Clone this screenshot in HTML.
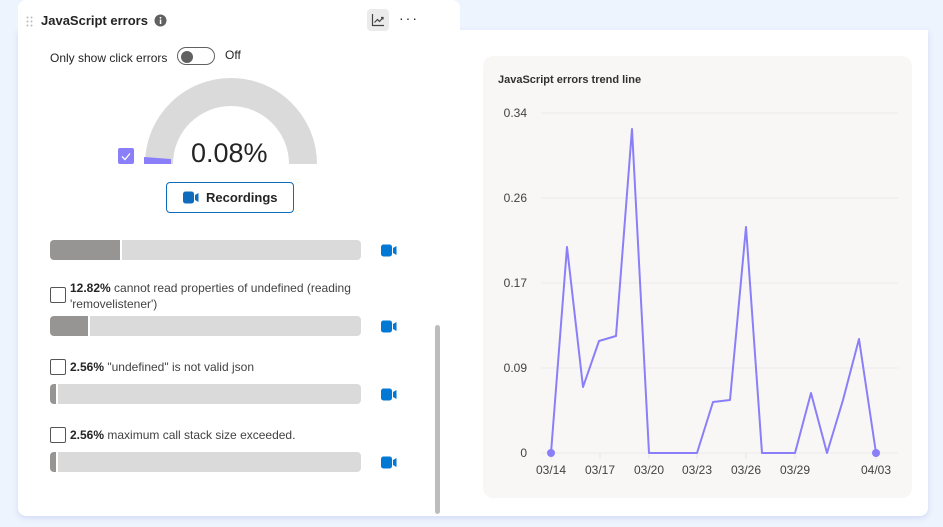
<!DOCTYPE html>
<html><head><style>
body{margin:0;width:943px;height:527px;background:#eef4fd;font-family:"Liberation Sans",sans-serif;position:relative;overflow:hidden;color:#242424}
.card{position:absolute;left:18px;top:30px;width:910px;height:486px;background:#fff;border-radius:0 0 8px 8px;box-shadow:0 2px 6px rgba(120,140,230,.25)}
.head{position:absolute;left:18px;top:0;width:442px;height:40px;background:#fff;border-radius:8px 8px 0 0}
.t{position:absolute;font-size:12px;white-space:nowrap}
.bar{position:absolute;left:50px;width:311px;height:20px;background:#dadada;border-radius:4px;overflow:hidden}
.bar i{position:absolute;left:0;top:0;bottom:0;background:#979593;border-right:2px solid #fff}
.cb{position:absolute;left:50px;width:14px;height:14px;border:1px solid #555;border-radius:2px;background:#fff}
.cam{position:absolute;left:381px}
</style></head><body>
<div class="card"></div>
<div class="head"></div>
<svg style="position:absolute;left:26px;top:16px" width="8" height="12"><g fill="#bbb"><circle cx="1.5" cy="1.5" r="1"/><circle cx="5.5" cy="1.5" r="1"/><circle cx="1.5" cy="5.5" r="1"/><circle cx="5.5" cy="5.5" r="1"/><circle cx="1.5" cy="9.5" r="1"/><circle cx="5.5" cy="9.5" r="1"/></g></svg>
<div class="t" style="left:41px;top:13px;font-size:13px;font-weight:bold">JavaScript errors</div>
<svg style="position:absolute;left:154px;top:14px" width="13" height="13"><circle cx="6.5" cy="6.5" r="6" fill="#616161"/><rect x="5.8" y="5.5" width="1.5" height="4.5" fill="#fff"/><circle cx="6.5" cy="3.8" r="0.9" fill="#fff"/></svg>
<div style="position:absolute;left:367px;top:9px;width:22px;height:22px;background:#ebebeb;border-radius:4px"></div>
<svg style="position:absolute;left:371px;top:13px" width="14" height="14" fill="none" stroke="#424242" stroke-width="1.2"><path d="M1.5 1v11.5H13"/><path d="M3.5 9.5l3-3 2 2 3.5-4"/><path d="M10 4.5h2v2"/></svg>
<div class="t" style="left:399px;top:10px;font-size:14px;letter-spacing:2px">···</div>
<div class="t" style="left:50px;top:51px">Only show click errors</div>
<div style="position:absolute;left:177px;top:47px;width:38px;height:18px;border:1px solid #616161;border-radius:10px;box-sizing:border-box"></div>
<div style="position:absolute;left:181px;top:51px;width:12px;height:12px;border-radius:50%;background:#616161"></div>
<div class="t" style="left:225px;top:48px">Off</div>
<svg style="position:absolute;left:140px;top:74px" width="184" height="92"><path d="M19 90A72 72 0 0 1 163 90" fill="none" stroke="#dadada" stroke-width="28"/><path d="M4 83l27 2v5l-27 0z" fill="#8a7ff8"/></svg>
<div style="position:absolute;left:118px;top:148px;width:16px;height:16px;background:#8a7ff8;border-radius:2px"></div>
<svg style="position:absolute;left:118px;top:148px" width="16" height="16"><path d="M4 8.5l3 3 5-6" stroke="#fff" fill="none" stroke-width="1.3"/></svg>
<div class="t" style="left:191px;top:138px;font-size:27px">0.08%</div>
<div style="position:absolute;left:166px;top:182px;width:128px;height:31px;border:1px solid #0f6cbd;border-radius:4px;box-sizing:border-box"></div>
<svg style="position:absolute;left:183px;top:191px" width="16" height="13"><rect x="0" y="0.5" width="11" height="12" rx="2.5" fill="#0f6cbd"/><path d="M12 4l3.5-2v9L12 9z" fill="#0f6cbd"/></svg>
<div class="t" style="left:206px;top:190px;font-size:13px;font-weight:bold;color:#242424">Recordings</div>
<div class="bar" style="top:240px"><i style="width:70px"></i></div>
<div class="cb" style="top:287px"></div>
<div class="t" style="left:70px;top:280px;line-height:16px"><b>12.82%</b> <span style="color:#424242">cannot read properties of undefined (reading<br>'removelistener')</span></div>
<div class="bar" style="top:316px"><i style="width:38px"></i></div>
<div class="cb" style="top:359px"></div>
<div class="t" style="left:70px;top:360px"><b>2.56%</b> <span style="color:#424242">"undefined" is not valid json</span></div>
<div class="bar" style="top:384px"><i style="width:6px"></i></div>
<div class="cb" style="top:427px"></div>
<div class="t" style="left:70px;top:428px"><b>2.56%</b> <span style="color:#424242">maximum call stack size exceeded.</span></div>
<div class="bar" style="top:452px"><i style="width:6px"></i></div>
<svg class="cam" style="top:244px" width="16" height="13"><rect y="0.5" width="11" height="12" rx="2.5" fill="#0078d4"/><path d="M12 4l3.5-2v9L12 9z" fill="#0078d4"/></svg>
<svg class="cam" style="top:320px" width="16" height="13"><rect y="0.5" width="11" height="12" rx="2.5" fill="#0078d4"/><path d="M12 4l3.5-2v9L12 9z" fill="#0078d4"/></svg>
<svg class="cam" style="top:388px" width="16" height="13"><rect y="0.5" width="11" height="12" rx="2.5" fill="#0078d4"/><path d="M12 4l3.5-2v9L12 9z" fill="#0078d4"/></svg>
<svg class="cam" style="top:456px" width="16" height="13"><rect y="0.5" width="11" height="12" rx="2.5" fill="#0078d4"/><path d="M12 4l3.5-2v9L12 9z" fill="#0078d4"/></svg>
<div style="position:absolute;left:435px;top:325px;width:5px;height:189px;background:#bdbdbd;border-radius:3px"></div>
<div style="position:absolute;left:483px;top:56px;width:429px;height:442px;background:#f8f7f6;border-radius:10px"></div>
<div class="t" style="left:498px;top:74px;font-size:11px;font-weight:bold;color:#323130">JavaScript errors trend line</div>
<svg style="position:absolute;left:483px;top:56px" width="429" height="442" font-family="Liberation Sans" font-size="12" fill="#424242">
<g stroke="#efeeed" stroke-width="1.5"><path d="M58 57H415M58 142H415M58 227H415M58 312H415M58 397H415"/></g>
<g text-anchor="end"><text x="44" y="61">0.34</text><text x="44" y="146">0.26</text><text x="44" y="231">0.17</text><text x="44" y="316">0.09</text><text x="44" y="401">0</text></g>
<g stroke="#e5e4e3"><path d="M68 397v6M117 397v6M166 397v6M214 397v6M263 397v6M312 397v6M393 397v6"/></g>
<g text-anchor="middle"><text x="68" y="418">03/14</text><text x="117" y="418">03/17</text><text x="166" y="418">03/20</text><text x="214" y="418">03/23</text><text x="263" y="418">03/26</text><text x="312" y="418">03/29</text><text x="393" y="418">04/03</text></g>
<polyline fill="none" stroke="#8a7ff8" stroke-width="2" stroke-linejoin="round" points="68,397 84,191 100,331 116,285 133,280 149,73 166,397 182,397 198,397 214,397 230,346 247,344 263,171 279,397 295,397 312,397 328,337 344,397 360,344 376,283 393,397"/>
<circle cx="68" cy="397" r="4" fill="#8a7ff8"/><circle cx="393" cy="397" r="4" fill="#8a7ff8"/>
</svg>
</body></html>
